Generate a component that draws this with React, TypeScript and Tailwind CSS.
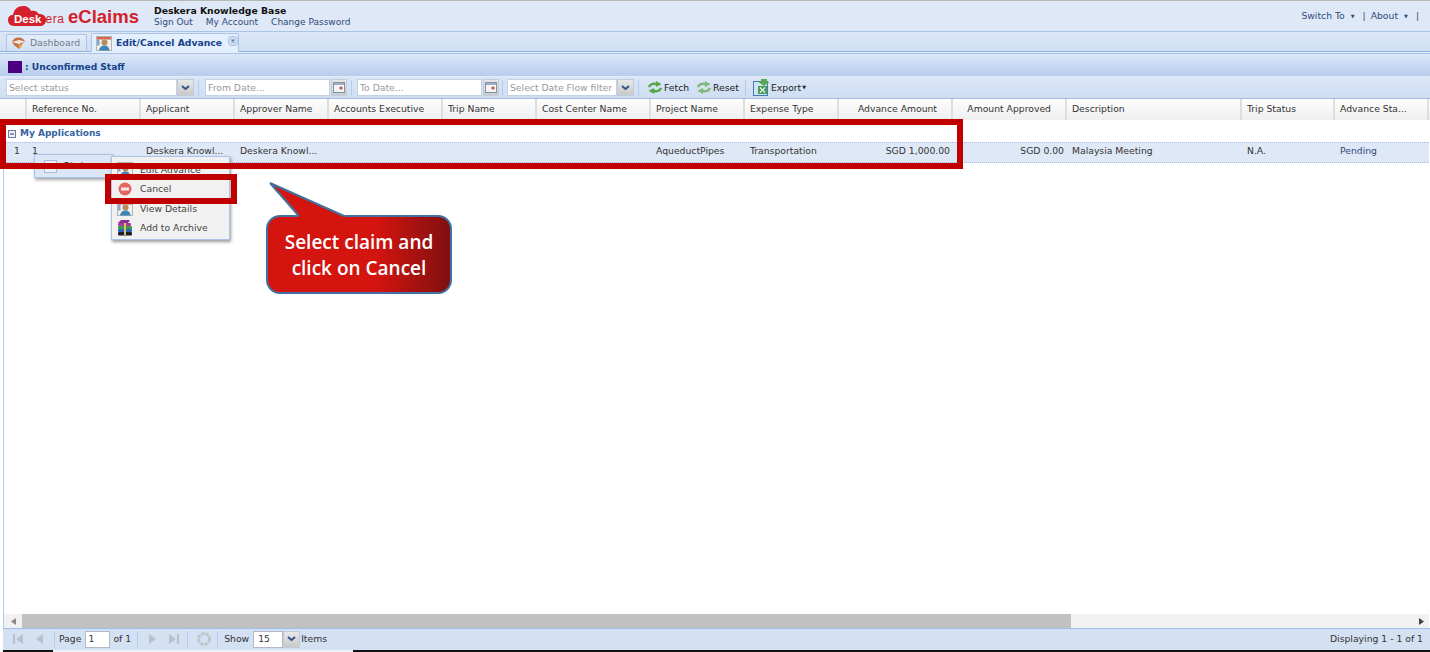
import React from "react";

const columns = [
  { name: "Reference No.", width: "w-[114px]" },
  { name: "Applicant", width: "w-[94px]" },
  { name: "Approver Name", width: "w-[94px]" },
  { name: "Accounts Executive", width: "w-[114px]" },
  { name: "Trip Name", width: "w-[94px]" },
  { name: "Cost Center Name", width: "w-[114px]" },
  { name: "Project Name", width: "w-[94px]" },
  { name: "Expense Type", width: "w-[94px]" },
  { name: "Advance Amount", width: "w-[114px]", right: true },
  { name: "Amount Approved", width: "w-[114px]", right: true },
  { name: "Description", width: "w-[175px]" },
  { name: "Trip Status", width: "w-[93px]" },
  { name: "Advance Sta...", width: "w-[94px]" },
];

const cells = [
  "1",
  "Deskera Knowl...",
  "Deskera Knowl...",
  "",
  "",
  "",
  "AqueductPipes",
  "Transportation",
  "SGD 1,000.00",
  "SGD 0.00",
  "Malaysia Meeting",
  "N.A.",
  "Pending",
];

const ChevronBtn = ({ w = "w-[17px]" }: { w?: string }) => (
  <span className={`${w} h-[17px] flex items-center justify-center bg-gradient-to-b from-[#e8e8e8] to-[#c9c9c9] border border-[#c0ccdc]`}>
    <svg width="9" height="6" viewBox="0 0 9 6">
      <path d="M1 1l3.500 3L8 1" fill="none" stroke="#2f4f86" strokeWidth="1.800" />
    </svg>
  </span>
);

const CalendarBtn = () => (
  <span className="w-[16px] h-[17px] ml-px flex items-center justify-center bg-gradient-to-b from-[#e8e8e8] to-[#cbcbcb] border border-[#c0ccdc]">
    <svg width="12" height="11" viewBox="0 0 12 11">
      <rect x="0.500" y="0.500" width="11" height="10" fill="#f4f4f4" stroke="#8391a5" />
      <rect x="1" y="1" width="10" height="2" fill="#9fb0c8" />
      <circle cx="8" cy="6" r="1.500" fill="#c8434c" />
    </svg>
  </span>
);

const Sep = ({ className = "" }: { className?: string }) => (
  <span className={`w-px h-[16px] bg-[#b3cbe8] ${className}`} />
);

const Field = ({ text, w }: { text: string; w: string }) => (
  <span className={`${w} h-[17px] pl-[2px] flex items-center bg-white border border-[#c3d2e6] text-[#9a9a9a] whitespace-nowrap overflow-hidden`}>
    {text}
  </span>
);

const RefreshIcon = ({ muted }: { muted?: boolean }) => {
  const color = muted ? "#7fb877" : "#55a843";
  return (
    <svg width="16" height="13" viewBox="0 0 16 14" className="shrink-0">
      <path d="M1.500 6.500C2.500 3.500 6 2 10 3.500" fill="none" stroke={color} strokeWidth="2.600" />
      <path d="M9 0l6 3.500L9 6.500z" fill={color} />
      <path d="M14.500 7.500C13.500 10.500 10 12 6 10.500" fill="none" stroke={color} strokeWidth="2.600" />
      <path d="M7 14l-6-3.500L7 7.500z" fill={color} />
    </svg>
  );
};

const PersonIcon = () => (
  <svg width="16" height="15" viewBox="0 0 16 15" className="shrink-0">
    <rect x="0.500" y="0.500" width="15" height="14" fill="#f1efe9" stroke="#b4b4b4" />
    <rect x="1" y="1" width="14" height="2.500" fill="#d9654a" />
    <rect x="1" y="3.500" width="2.500" height="6" fill="#7fa8d8" />
    <circle cx="8.500" cy="6.500" r="3" fill="#b98a5e" />
    <path d="M3 14.500c.5-3.500 2.500-5 5.500-5s4.500 1.500 5 5z" fill="#3f83b8" />
  </svg>
);

const ArchiveIcon = () => (
  <svg width="16" height="16" viewBox="0 0 16 16" className="shrink-0">
    <path d="M1 3l3-3h9l-2 3z" fill="#8e2c8e" />
    <rect x="1" y="3" width="13" height="3" rx="1" fill="#a83a9a" />
    <rect x="1" y="6" width="14" height="3" rx="1" fill="#3c9a46" />
    <rect x="1" y="9" width="14" height="3" rx="1" fill="#2b63b5" />
    <rect x="1" y="12" width="14" height="3.500" rx="1" fill="#1f1f2a" />
    <rect x="7" y="3" width="2" height="12" fill="#d8c56a" />
  </svg>
);

const PagerArrow = ({ d, className = "" }: { d: string; className?: string }) => (
  <svg width="12" height="12" viewBox="0 0 12 12" className={`shrink-0 ${className}`}>
    <path d={d} fill="#b9c0ca" />
  </svg>
);

const App = () => {
  return (
    <div
      className="relative w-[1430px] h-[652px] overflow-hidden flex flex-col bg-white text-[#333] text-[9.25px]"
      style={{ fontFamily: '"DejaVu Sans", Verdana, sans-serif' }}
    >
      {/* top header */}
      <div className="h-[31px] shrink-0 flex bg-[#dfe8f6] border-t border-[#b8b8b8]">
        <div className="w-[154px] pl-[8px] pt-[4px] flex items-start" style={{ fontFamily: '"Liberation Sans", sans-serif' }}>
          <div className="relative w-[56px] h-[21px] shrink-0">
            <svg width="38" height="21" viewBox="0 0 38 21">
              <path d="M6 21C2 21 0 18 0 15c0-3 2-5 5-5 1-6 5-9 10-9 4 0 7 2 8 5 3-1 6 0 8 3 4 0 7 2 7 6 0 4-3 6-6 6z" fill="#d3202b" />
            </svg>
            <span className="absolute left-[6px] top-[8px] text-[11.500px] leading-[12px] font-bold text-white whitespace-nowrap">
              Desk<span className="text-[#d3202b] font-normal text-[12px] tracking-[0.5px] ml-[4px]">era</span>
            </span>
          </div>
          <span className="ml-[4px] -mt-[1px] text-[18.500px] leading-[26px] font-bold text-[#d3202b] whitespace-nowrap">
            eClaims
          </span>
        </div>
        <div className="pt-[3px]">
          <div className="text-[9.300px] font-bold leading-[13px] text-[#111]">Deskera Knowledge Base</div>
          <div className="flex text-[9px] text-[#2f4a7d] leading-[10px]">
            <span>Sign Out</span>
            <span className="ml-[13px]">My Account</span>
            <span className="ml-[13px]">Change Password</span>
          </div>
        </div>
        <div className="ml-auto pr-[11px] pt-[9px] flex items-start text-[#2f4a7d] leading-[12px]">
          <span>Switch To</span>
          <span className="ml-[6px] text-[5px]">▼</span>
          <span className="ml-[8px]">|</span>
          <span className="ml-[5px]">About</span>
          <span className="ml-[6px] text-[5px]">▼</span>
          <span className="ml-[8px]">|</span>
        </div>
      </div>

      {/* tab strip */}
      <div className="h-[21px] shrink-0 flex items-end pl-[6px] bg-gradient-to-b from-[#dbe6f6] to-[#cfdff3] border-t border-[#a9c4e8] border-b border-b-[#8fb2e0]">
        <div className="w-[81px] h-[17px] flex items-center pl-[4px] gap-[4px] rounded-t-[2px] bg-gradient-to-b from-[#e4edf9] to-[#d2e0f3] border border-b-0 border-[#a9c4e8] text-[#6e7b8d]">
          <svg width="15" height="13" viewBox="0 0 15 13" className="shrink-0">
            <path d="M1 5c1-3 4-5 7-4.500 3 0 5 2 6 4L12 6 8 12 3 8z" fill="#c4704a" />
            <path d="M1 5l7-2 6 1.500L8 7z" fill="#f3e9d8" />
            <circle cx="9" cy="9" r="1.800" fill="#e3a33c" />
          </svg>
          Dashboard
        </div>
        <div className="w-[148px] h-[19px] ml-[4px] -mb-px flex items-center pl-[4px] gap-[4px] rounded-t-[2px] bg-[#e4effd] border border-b-0 border-[#a9c4e8] text-[#15428b] font-bold z-10">
          <PersonIcon />
          <span className="whitespace-nowrap">Edit/Cancel Advance</span>
          <svg width="10" height="10" viewBox="0 0 10 10" className="ml-[2px] -mt-[5px] shrink-0">
            <rect x="0.500" y="0.500" width="9" height="9" rx="3" fill="#cfdff3" stroke="#a9c0df" />
            <path d="M3.500 3.500l3 3M6.500 3.500l-3 3" stroke="#5a7cae" strokeWidth="1.200" />
          </svg>
        </div>
      </div>

      <div className="h-[2px] shrink-0 bg-[#e6eef9] border-b border-[#a9c4e8]" />

      {/* panel title */}
      <div className="h-[23px] shrink-0 flex items-center pl-[8px] pt-[4px] bg-gradient-to-b from-[#dce8f8] to-[#b6cdec] text-[#15428b] font-bold border-b border-[#e3ecf8]">
        <span className="w-[14px] h-[12px] bg-[#4b0082]" />
        <span className="ml-[3px] mt-px text-[9.100px]">: Unconfirmed Staff</span>
      </div>

      {/* filter toolbar */}
      <div className="h-[22px] shrink-0 flex items-center pl-[6px] bg-gradient-to-b from-[#dae6f6] to-[#cfdef3] border-b border-[#9fbde6] text-[#222]">
        <Field text="Select status" w="w-[171px]" />
        <ChevronBtn />
        <Sep className="ml-[4px]" />
        <Field text="From Date..." w="w-[125px] ml-[6px]" />
        <CalendarBtn />
        <Sep className="ml-[4px]" />
        <Field text="To Date..." w="w-[125px] ml-[5px]" />
        <CalendarBtn />
        <Sep className="ml-[3px]" />
        <Field text="Select Date Flow filter" w="w-[110px] ml-[4px]" />
        <ChevronBtn />
        <Sep className="ml-[4px]" />
        <span className="ml-[8px] flex items-center gap-px"><RefreshIcon />Fetch</span>
        <span className="ml-[7px] flex items-center gap-px"><RefreshIcon muted />Reset</span>
        <Sep className="ml-[6px]" />
        <span className="ml-[7px] flex items-center gap-px">
          <svg width="17" height="17" viewBox="0 0 17 17" className="shrink-0">
            <rect x="0.500" y="2.500" width="14" height="14" fill="#cfe3f7" stroke="#3f7fb5" />
            <rect x="5" y="7" width="9" height="8" fill="#4f9a58" />
            <path d="M7 8.500l5 5M12 8.500l-5 5" stroke="#eaf5ea" strokeWidth="1.200" />
            <path d="M8 0h6v3h2.500l-5.500 4-5.500-4H8z" fill="#58aa46" />
          </svg>
          Export
          <span className="text-[5px]">▼</span>
        </span>
      </div>

      {/* column headers */}
      <div className="h-[21px] shrink-0 flex bg-gradient-to-b from-[#fdfdfd] to-[#efefef]">
        <div className="w-[27px] shrink-0 border-r-2 border-[#dedede]" />
        {columns.map((col) => (
          <div
            key={col.name}
            className={`${col.width} shrink-0 flex items-center pl-[5px] pb-[2px] border-r-2 border-[#dedede] whitespace-nowrap ${col.right ? "justify-end pr-[14px]" : ""}`}
          >
            {col.name}
          </div>
        ))}
      </div>

      {/* grid body */}
      <div className="flex-1 flex flex-col min-h-0 border-l border-[#b3cbe8] ml-[3px] mr-[1px]">
        <div className="h-[22px] shrink-0 flex items-end pb-[2px] pl-[4px] gap-[4px] text-[#3764a0] font-bold">
          <svg width="8" height="8" viewBox="0 0 8 8" className="mb-[2px] shrink-0">
            <rect x="0.500" y="0.500" width="7" height="7" fill="#eef2f8" stroke="#6a7f9f" />
            <path d="M2 4h4" stroke="#2b3f63" />
          </svg>
          <span className="text-[9px]">My Applications</span>
        </div>
        <div className="h-[21px] shrink-0 flex items-start pt-[2px] leading-[12px] -ml-[4px] bg-[#dfe8f6] border-y border-dotted border-[#a3bae9]">
          <div className="w-[27px] shrink-0 flex justify-end pr-[7px]">1</div>
          {cells.map((cell, i) => (
            <div
              key={i}
              className={`${columns[i].width} shrink-0 flex pl-[5px] whitespace-nowrap ${
                columns[i].right ? "justify-end pr-[3px]" : ""
              } ${i === 12 ? "text-[#2f4a7d]" : ""}`}
            >
              {cell}
            </div>
          ))}
        </div>
        <div className="flex-1" />

        {/* horizontal scrollbar */}
        <div className="h-[14px] shrink-0 flex items-center bg-[#f1f1f1]">
          <span className="w-[18px] flex justify-center">
            <svg width="5" height="7" viewBox="0 0 5 7"><path d="M5 0v7L0 3.500z" fill="#8a8a8a" /></svg>
          </span>
          <span className="w-[1049px] h-[14px] bg-[#c1c1c1]" />
          <span className="ml-auto mr-[5px]">
            <svg width="5" height="7" viewBox="0 0 5 7"><path d="M0 0v7l5-3.500z" fill="#444" /></svg>
          </span>
        </div>
      </div>

      {/* pager */}
      <div className="h-[22px] shrink-0 flex items-center pl-[7px] pr-[7px] pb-px ml-[3px] bg-[#d3e1f2] border-t border-[#9fbde6]">
        <PagerArrow d="M1 1h2v10H1zM11 1v10L4 6z" className="ml-[2px]" />
        <PagerArrow d="M9 1v10L2 6z" className="ml-[10px]" />
        <Sep className="ml-[8px]" />
        <span className="ml-[4px]">Page</span>
        <span className="ml-[4px] w-[25px] h-[17px] pl-[2px] flex items-center bg-white border border-[#b5b8c8]">1</span>
        <span className="ml-[3px]">of 1</span>
        <Sep className="ml-[6px]" />
        <PagerArrow d="M3 1v10l7-5z" className="ml-[8px]" />
        <PagerArrow d="M1 1v10l7-5zM9 1h2v10H9z" className="ml-[10px]" />
        <Sep className="ml-[7px]" />
        <svg width="16" height="16" viewBox="0 0 16 16" className="ml-[8px] shrink-0">
          <circle cx="8" cy="8" r="5.500" fill="none" stroke="#bfc4c9" strokeWidth="3" strokeDasharray="3.500 1" />
        </svg>
        <Sep className="ml-[5px]" />
        <span className="ml-[6px]">Show</span>
        <span className="ml-[4px] w-[30px] h-[17px] pl-[4px] flex items-center bg-white border border-[#b5b8c8]">15</span>
        <ChevronBtn w="w-[17px]" />
        <span className="ml-[1px]">Items</span>
        <span className="ml-auto">Displaying 1 - 1 of 1</span>
      </div>
      <div className="h-[2px] shrink-0 flex bg-[#111]">
        <span className="w-[3px] bg-white" />
        <span className="w-[50px]" />
        <span className="w-[300px] bg-[#eef2f8]" />
      </div>

      {/* floating menus */}
      <div className="absolute left-[34px] top-[154px] w-[79px] h-[24px] flex items-center pl-[9px] bg-[#dbe6f6] border border-[#a9c4e8] shadow-[1px_2px_3px_rgba(0,0,0,0.35)] font-bold text-[#444]">
        <svg width="13" height="13" viewBox="0 0 13 13" className="shrink-0"><rect x="0.500" y="0.500" width="12" height="12" fill="#eef2f8" stroke="#a9bcd6" /></svg>
        <span className="ml-[6px]">Status</span>
        <span className="ml-[6px] text-[5px]">▶</span>
      </div>
      <div className="absolute left-[111px] top-[156px] w-[119px] h-[84px] pt-[3px] flex flex-col bg-[#f1f1f1] border border-[#a9c4e8] shadow-[1px_2px_3px_rgba(0,0,0,0.4)] text-[#444]">
        {[
          { label: "Edit Advance", icon: <PersonIcon /> },
          {
            label: "Cancel",
            icon: (
              <svg width="14" height="14" viewBox="0 0 14 14" className="shrink-0">
                <circle cx="7" cy="7" r="6.500" fill="#e4665f" />
                <rect x="3" y="5.500" width="8" height="3" fill="#fbeaea" />
              </svg>
            ),
          },
          { label: "View Details", icon: <PersonIcon /> },
          { label: "Add to Archive", icon: <ArchiveIcon /> },
        ].map((item) => (
          <div key={item.label} className="h-[19.500px] shrink-0 flex items-center pl-[4px] gap-[7px] whitespace-nowrap">
            <span className="w-[17px] flex justify-center">{item.icon}</span>
            {item.label}
          </div>
        ))}
      </div>

      {/* red highlight boxes */}
      <div className="absolute left-0 top-[119px] w-[963px] h-[50px] border-[6px] border-[#c00000]" />
      <div className="absolute left-[105px] top-[174px] w-[132px] h-[30px] border-[6px] border-[#c00000]" />

      {/* callout */}
      <div className="absolute left-[266px] top-[215px] w-[186px] h-[79px] flex items-center justify-center text-center rounded-[14px] border-2 border-[#41719c] bg-[linear-gradient(90deg,#d3140f_0%,#d3140f_60%,#7f1010_100%)] text-white text-[19px] leading-[26px] font-semibold" style={{ fontFamily: '"Open Sans", sans-serif' }}>
        Select claim and
        <br />
        click on Cancel
      </div>
      <svg width="82" height="38" viewBox="0 0 82 38" className="absolute left-[268px] top-[181px]">
        <path d="M2 2L31 36H77z" fill="#d3140f" />
        <path d="M2 2L31 35M2 2L76 35" fill="none" stroke="#41719c" strokeWidth="2" />
      </svg>
    </div>
  );
};

export default App;
